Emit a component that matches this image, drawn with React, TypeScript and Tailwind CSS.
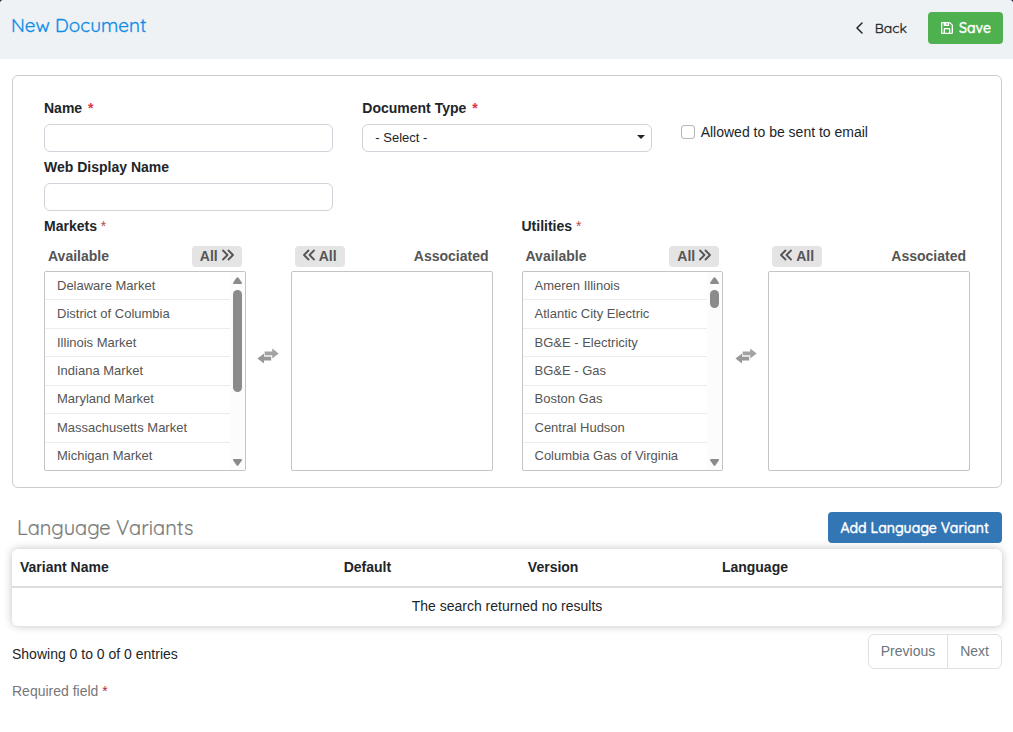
import React from "react";
import { BiSave } from "react-icons/bi";

const markets = [
  "Delaware Market",
  "District of Columbia",
  "Illinois Market",
  "Indiana Market",
  "Maryland Market",
  "Massachusetts Market",
  "Michigan Market",
];

const utilities = [
  "Ameren Illinois",
  "Atlantic City Electric",
  "BG&E - Electricity",
  "BG&E - Gas",
  "Boston Gas",
  "Central Hudson",
  "Columbia Gas of Virginia",
];

function DoubleChevron({ left = false }: { left?: boolean }) {
  return (
    <svg
      aria-hidden="true"
      viewBox="0 0 12 12"
      className="mb-0.5 size-3"
      fill="none"
      stroke="currentColor"
      strokeWidth="1.8"
      strokeLinecap="round"
      strokeLinejoin="round"
    >
      {left ? (
        <path d="M5.5 1.5 1 6l4.5 4.5M11 1.5 6.5 6l4.5 4.5" />
      ) : (
        <path d="m1 1.5 4.5 4.5L1 10.5M6.5 1.5 11 6l-4.5 4.5" />
      )}
    </svg>
  );
}

function Scrollbar({ thumb }: { thumb: string }) {
  return (
    <div
      aria-hidden="true"
      className="flex w-[15px] shrink-0 flex-col items-center bg-[#fcfcfc] text-[#8b8b8b]"
    >
      <svg viewBox="0 0 9 7" className="mt-[5px] h-[7px] w-[9px]" fill="currentColor">
        <path d="M3.5.8q1-1.2 2 0L8.8 5.4Q9.4 7 8 7H1Q-.4 7 .2 5.4z" />
      </svg>
      <div className={`mt-1.5 w-[9px] rounded-full bg-[#8b8b8b] ${thumb}`} />
      <svg viewBox="0 0 9 7" className="mt-auto mb-1 h-[7px] w-[9px]" fill="currentColor">
        <path d="M3.5 6.2q1 1.2 2 0L8.8 1.6Q9.4 0 8 0H1Q-.4 0 .2 1.6z" />
      </svg>
    </div>
  );
}

function TransferIcon() {
  return (
    <svg aria-hidden="true" viewBox="0 0 22 16" className="h-4 w-[22px]">
      <path d="M7.6 3.6h7.6V.4L21.7 5.4l-6.5 5V7.6H7.6z" fill="#a3a3a3" />
      <path d="M14.2 8.4H7V5.6L.4 10.6l6.6 5v-3h7.2z" fill="#989898" />
      <path d="M7.2 8h8" stroke="#fff" strokeWidth=".7" />
    </svg>
  );
}

function DualList({ title, items, thumb }: { title: string; items: string[]; thumb: string }) {
  return (
    <section aria-label={title}>
      <h2 className="text-sm leading-5 font-bold">
        {title} <span className="font-normal text-[#b94a48]">*</span>
      </h2>
      <div className="mt-2.5 flex text-[#555]">
        <div className="min-w-0 flex-1">
          <div className="flex items-start justify-between px-1 text-sm leading-5 font-bold">
            <span>Available</span>
            <button type="button" className="flex h-[21px] items-center gap-1 rounded bg-[#e4e4e4] px-2 pb-px">
              All <DoubleChevron />
            </button>
          </div>
          <div className="mt-1 flex h-[200px] overflow-hidden rounded-xs border border-[#c4c4c4]">
            <ul className="flex min-w-0 flex-1 flex-col">
              {items.map((item) => (
                <li
                  key={item}
                  className="flex flex-1 items-center truncate border-b border-[#ececec] pl-3 text-[13px] leading-5 last:border-b-0"
                >
                  {item}
                </li>
              ))}
            </ul>
            <Scrollbar thumb={thumb} />
          </div>
        </div>
        <div className="flex w-[45px] shrink-0 justify-center pt-[102px]">
          <TransferIcon />
        </div>
        <div className="min-w-0 flex-1">
          <div className="flex items-start justify-between px-1 text-sm leading-5 font-bold">
            <button type="button" className="flex h-[21px] items-center gap-1 rounded bg-[#e4e4e4] px-2 pb-px">
              <DoubleChevron left /> All
            </button>
            <span>Associated</span>
          </div>
          <div className="mt-1 h-[200px] rounded-xs border border-[#c4c4c4]" />
        </div>
      </div>
    </section>
  );
}

export default function App() {
  return (
    <div className="min-h-screen bg-white font-['Liberation_Sans',Arial,sans-serif] text-sm leading-5 text-[#212529]">
      <div className="bg-[#0b1020]">
        <header className="flex items-start justify-between rounded-t-[3px] bg-[#eff2f5] pt-3 pr-2.5 pb-[15px] pl-[11px] font-[Quicksand,Lato,sans-serif] [-webkit-text-stroke:0.3px]">
          <h1 className="text-[19px] leading-[26px] text-[#0d8ce8]">New Document</h1>
          <div className="flex items-center gap-[21px]">
            <a href="#back" className="flex items-center gap-3 text-sm">
              <svg
                aria-hidden="true"
                viewBox="0 0 7 12"
                className="h-3 w-[7px]"
                fill="none"
                stroke="currentColor"
                strokeWidth="1.5"
                strokeLinecap="round"
                strokeLinejoin="round"
              >
                <path d="M6 1 1 6l5 5" />
              </svg>
              Back
            </a>
            <button
              type="button"
              className="flex h-8 items-center gap-1 rounded bg-[#4fb04f] pr-3 pl-[11px] text-sm font-medium text-white [-webkit-text-stroke:0.4px]"
            >
              <BiSave className="size-4" aria-hidden="true" />
              Save
            </button>
          </div>
        </header>
      </div>

      <main className="pt-4 pr-[11px] pl-3">
        <form className="rounded-md border border-[#ccc] px-[31px] pt-[22px] pb-4">
          <div className="grid grid-cols-3 gap-x-[29px] gap-y-[5px]">
            <div>
              <label htmlFor="name" className="block font-bold">
                Name <span className="ml-0.5 text-[#dc3545]">*</span>
              </label>
              <input id="name" type="text" className="mt-1.5 block h-7 w-full rounded-md border border-[#ced4da] px-3 text-[13px]" />
            </div>
            <div>
              <label htmlFor="type" className="block font-bold">
                Document Type <span className="ml-0.5 text-[#dc3545]">*</span>
              </label>
              <div className="relative mt-1.5">
                <select id="type" className="block h-7 w-full appearance-none rounded-md border border-[#ced4da] bg-white px-3 text-[13px]">
                  <option>- Select -</option>
                </select>
                <svg aria-hidden="true" viewBox="0 0 8 4" className="pointer-events-none absolute top-[11px] right-[7px] h-1 w-2" fill="currentColor">
                  <path d="M0 0h8L4 4z" />
                </svg>
              </div>
            </div>
            <div className="flex items-center gap-1.5 pt-3.5">
              <input
                id="email"
                type="checkbox"
                className="size-3.5 appearance-none rounded-[3px] border border-[#b5b7b9] bg-white checked:bg-[#3276b5]"
              />
              <label htmlFor="email">Allowed to be sent to email</label>
            </div>
            <div>
              <label htmlFor="display" className="block font-bold">
                Web Display Name
              </label>
              <input id="display" type="text" className="mt-1.5 block h-7 w-full rounded-md border border-[#ced4da] px-3 text-[13px]" />
            </div>
          </div>
          <div className="mt-[5px] grid grid-cols-2 gap-x-[29px]">
            <DualList title="Markets" items={markets} thumb="h-[102px]" />
            <DualList title="Utilities" items={utilities} thumb="h-[18px]" />
          </div>
        </form>

        <div className="mt-6 flex items-center justify-between pl-[5px] font-[Quicksand,Lato,sans-serif]">
          <h2 className="text-xl leading-7 text-[#7b7b7b] [-webkit-text-stroke:0.2px]">Language Variants</h2>
          <button type="button" className="h-[31px] rounded bg-[#3276b5] px-[13px] text-sm font-medium text-white [-webkit-text-stroke:0.4px]">
            Add Language Variant
          </button>
        </div>

        <div className="mt-1.5 overflow-hidden rounded-md bg-white shadow-[0_0_8px_rgba(0,0,0,0.25)]">
          <table className="w-full table-fixed border-collapse text-left">
            <thead>
              <tr className="h-[38px] border-b-2 border-[#ddd]">
                <th className="w-[32.7%] px-2 pb-0.5">Variant Name</th>
                <th className="w-[18.6%] px-2 pb-0.5">Default</th>
                <th className="w-[19.6%] px-2 pb-0.5">Version</th>
                <th className="px-2 pb-0.5">Language</th>
              </tr>
            </thead>
            <tbody>
              <tr className="h-[39px]">
                <td colSpan={4} className="pb-0.5 text-center">
                  The search returned no results
                </td>
              </tr>
            </tbody>
          </table>
        </div>

        <div className="mt-2 flex items-start justify-between">
          <p className="pt-2.5">Showing 0 to 0 of 0 entries</p>
          <nav
            aria-label="Pagination"
            className="flex h-[35px] divide-x divide-[#dee2e6] rounded-md border border-[#dee2e6] text-[#6c757d]"
          >
            <button type="button" className="px-3 pb-0.5">Previous</button>
            <button type="button" className="px-3 pb-0.5">Next</button>
          </nav>
        </div>
        <p className="mt-3 text-[#777]">
          Required field <span className="text-[#b02a37]">*</span>
        </p>
      </main>
    </div>
  );
}
